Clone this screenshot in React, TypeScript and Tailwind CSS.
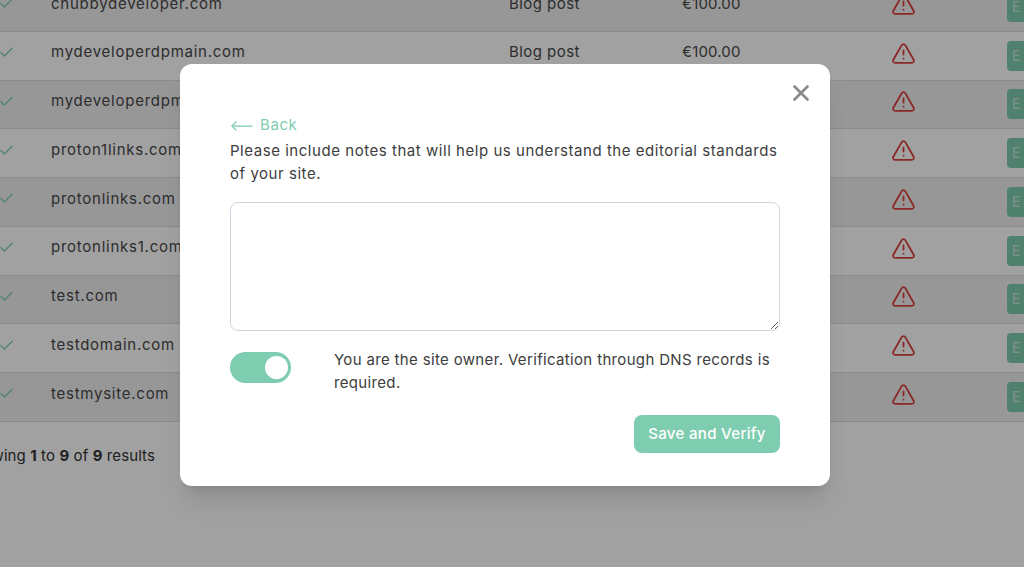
import React from 'react';
import { Check, TriangleAlert, X, MoveLeft } from 'lucide-react';

const domains = [
  'chubbydeveloper.com',
  'mydeveloperdpmain.com',
  'mydeveloperdpmain.com',
  'proton1links.com',
  'protonlinks.com',
  'protonlinks1.com',
  'test.com',
  'testdomain.com',
  'testmysite.com',
];

export default function App() {
  return (
    <div className="relative h-[567px] w-[1024px] overflow-hidden bg-white font-['Inter','Liberation_Sans',sans-serif] text-[15px] text-[#3d3d3d]">
      <div className="-mt-[17px] -ml-[60px] w-[1120px] text-[#484848]">
        {domains.map((domain, i) => (
          <div
            key={i}
            className={`flex h-[48.75px] items-center border-b border-[#dcdcdc] ${i % 2 === 0 ? 'bg-[#f0f0f0]' : 'bg-white'}`}
          >
            <div className="flex w-[111px] pb-[6px] pl-[58px]">
              <Check size={17} strokeWidth={1.75} className="text-[#7fcdb0]" />
            </div>
            <div className="w-[458px] pb-[6px] tracking-[0.75px]">{domain}</div>
            <div className="w-[173px] pb-[6px] tracking-[0.45px]">Blog post</div>
            <div className="w-[209px] pb-[6px] tracking-[0.15px]">€100.00</div>
            <div className="flex w-[116px] pb-[5px]">
              <TriangleAlert size={25} strokeWidth={1.75} className="text-[#d9403a]" />
            </div>
            <div className="flex h-[30px] w-[50px] items-center rounded bg-[#7fcdb0] pl-[5px] text-sm text-[#c8e8dc]">
              E
            </div>
          </div>
        ))}
        <div className="mt-[23px] pl-[24px] tracking-[0.1px] text-[#333333]">
          Showing <span className="font-bold">1</span> to <span className="font-bold">9</span> of{' '}
          <span className="font-bold">9</span> results
        </div>
      </div>

      <div className="absolute inset-0 flex items-start bg-black/[.37] pt-[64px] pl-[180px]">
        <div className="relative h-[422px] w-[650px] rounded-xl bg-white px-[50px] pt-[50px] shadow-xl">
          <button className="absolute top-[16px] right-[16px] text-[#8a8a8a]">
            <X size={26} strokeWidth={2.5} />
          </button>

          <div className="flex h-[25px] items-start gap-[6px] text-[#7fcdb0]">
            <MoveLeft size={24} strokeWidth={1.25} />
            <span className="tracking-[0.6px]">Back</span>
          </div>
          <p className="leading-[23px] tracking-[0.54px]">
            Please include notes that will help us understand the editorial standards of your site.
          </p>

          <textarea className="mt-[17px] block h-[129px] w-full rounded-lg border border-[#cbd5e0] bg-white" />

          <div className="mt-[17px] flex">
            <div className="mt-[4px] flex h-[31px] w-[61px] shrink-0 items-center justify-end rounded-full bg-[#7fcdb0] pr-[3px]">
              <div className="h-[23px] w-[23px] rounded-full bg-white" />
            </div>
            <p className="ml-[43px] w-[446px] leading-[23px] tracking-[0.34px]">
              You are the site owner. Verification through DNS records is required.
            </p>
          </div>

          <div className="mt-[21px] flex justify-end">
            <button className="h-[38px] w-[146px] rounded-lg bg-[#7fcdb0] font-medium tracking-[0.33px] text-white">
              Save and Verify
            </button>
          </div>
        </div>
      </div>
    </div>
  );
}
